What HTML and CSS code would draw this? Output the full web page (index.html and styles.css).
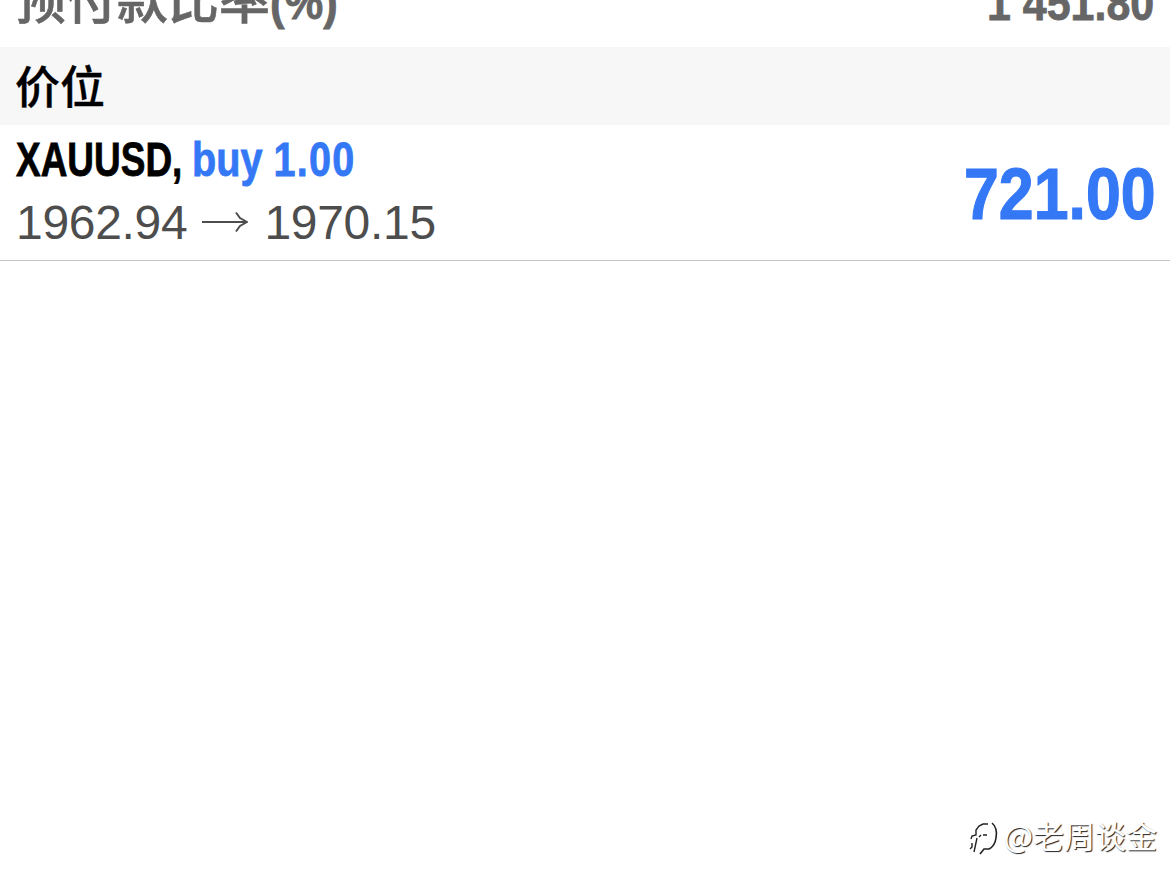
FILE: index.html
```
<!DOCTYPE html>
<html lang="zh-CN">
<head>
    <meta charset="UTF-8">
    <meta name="viewport" content="width=device-width, initial-scale=1.0">
    <title>价位</title>
    <link rel="stylesheet" href="styles.css">
</head>
<body>
    <div class="summary-row">
        <span class="summary-label">预付款比率<span class="unit condensed">(%)</span></span>
        <span class="summary-value"><span class="condensed">1 451.80</span></span>
    </div>
    <h2 class="section-title">价位</h2>
    <div class="position">
        <div class="position-info">
            <div class="position-name">
                <span class="symbol"><span class="condensed">XAUUSD,</span></span>
                <span class="order"><span class="condensed">buy <span class="volume">1.00</span></span></span>
            </div>
            <div class="position-prices">
                <span class="price">1962.94</span>
                <svg class="arrow" width="46" height="22" viewBox="0 0 46 22" fill="none" stroke="#4d4d4d" stroke-width="2">
                    <path d="M0 11H44M34 1.5L38 7L45 11L38 15L34 20.500"/>
                </svg>
                <span class="price">1970.15</span>
            </div>
        </div>
        <div class="profit"><span class="condensed">721.00</span></div>
    </div>

    <!-- Watermark -->
    <div class="watermark">
        <svg class="watermark-logo" width="32" height="40" viewBox="0 0 32 40" fill="none" stroke="#222">
            <path stroke-width="1.400" d="M1 31L3 29V25M5 34L8 20M2 21L3 18L7 17V12L10 8L14 6H19M10 19L12 17M14 17H18"/>
            <path stroke-width="1.600" d="M23 5Q29 10 27 20Q26 28 20 31H15L11 36"/>
        </svg>
        <span>@老周谈金</span>
    </div>
</body>
</html>
```
FILE: styles.css
```
body {
    position: relative;
    height: 890px;
    margin: 0;
    overflow: hidden;
    background-color: #fff;
    font-family: "Liberation Sans", "Noto Sans CJK SC", sans-serif;
}

/* Text squeezed horizontally inside a box of fixed width */
.condensed {
    display: inline-block;
    white-space: pre;
    transform-origin: left center;
    -webkit-text-stroke: 0.8px;
}

.summary-row {
    display: flex;
    justify-content: space-between;
    height: 47px;
    padding: 0 16px 0 15px;
    color: #666;
    font-size: 48px;
    font-weight: bold;
    line-height: 56px;
}

.summary-label {
    margin-top: -31px;
    font-family: "Noto Sans CJK SC", sans-serif;
    font-size: 51px;
    font-weight: 500;
    white-space: nowrap;
    -webkit-text-stroke: 0.6px;
}

.unit {
    font-family: "Liberation Sans", sans-serif;
    font-size: 49px;
    font-weight: bold;
    transform: scaleX(0.89);
}

.summary-value {
    width: 167px;
    margin-top: -24px;
}

.summary-value .condensed {
    transform: scaleX(0.895);
}

.section-title {
    height: 78px;
    margin: 0;
    padding-left: 15px;
    background-color: #f7f7f7;
    font-family: "Noto Sans CJK SC", sans-serif;
    font-size: 45px;
    font-weight: 500;
    line-height: 75px;
    -webkit-text-stroke: 0.3px;
}

.position {
    display: flex;
    justify-content: space-between;
    height: 135px;
    padding: 0 15px 0 16px;
    border-bottom: 1px solid #c4c4c4;
}

.position-name {
    display: flex;
    height: 66px;
    font-size: 48px;
    font-weight: bold;
    line-height: 69px;
}

.symbol {
    width: 176px;
}

.symbol .condensed {
    transform: scaleX(0.77);
}

.order {
    color: #3478f6;
}

.order .condensed {
    transform: scaleX(0.825);
}

.volume {
    letter-spacing: 1.5px;
}

.position-prices {
    display: flex;
    align-items: center;
    height: 62px;
    color: #4d4d4d;
    font-size: 48px;
}

.price {
    letter-spacing: -0.3px;
}

.arrow {
    margin: 0 16px 0 15px;
}

.profit {
    width: 191px;
    color: #3478f6;
    font-size: 72px;
    font-weight: bold;
    line-height: 139px;
}

.profit .condensed {
    transform: scaleX(0.87);
    -webkit-text-stroke: 1.2px;
}

.watermark {
    position: absolute;
    right: 13px;
    bottom: 32px;
    display: flex;
    align-items: center;
    height: 48px;
    color: #fff;
    font-family: "Noto Sans CJK SC", sans-serif;
    font-size: 31px;
    text-shadow: 1px 1px 1px #222;
    white-space: nowrap;
}

.watermark-logo {
    margin: 8px 3px 0 0;
}
```
